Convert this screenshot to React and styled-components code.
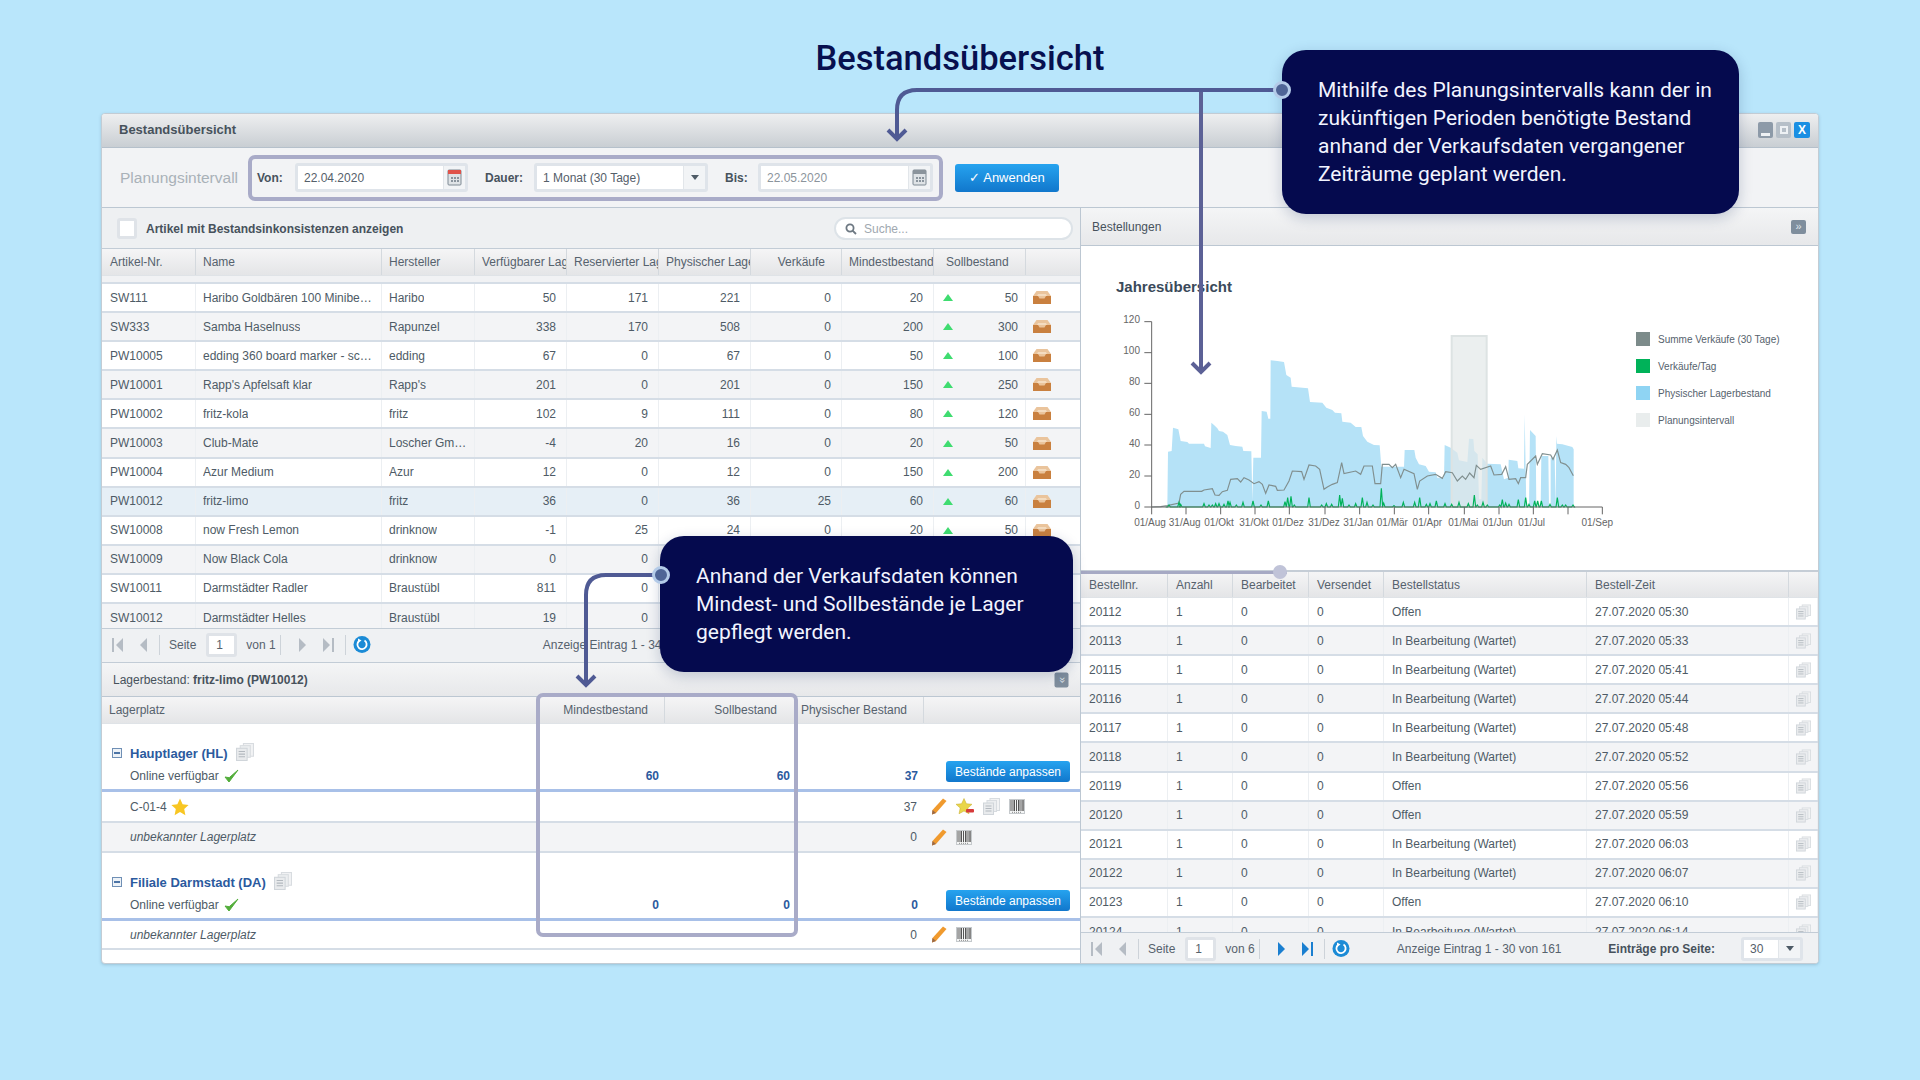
import React from "react";
import styled, { createGlobalStyle } from "styled-components";

const LEFT_COLS = "94px 186px 93px 92px 92px 92px 91px 92px 92px 55px";
const RIGHT_COLS = "87px 65px 76px 75px 203px 202px 1fr";
const STOCK_COLS = "435px 128px 131px 128px 1fr";

const GlobalStyle = createGlobalStyle`
  body {
    margin: 0;
    background: #b9e6fb;
    font-family: "Liberation Sans", Arial, sans-serif;
    font-size: 12px;
    color: #4e5b66;
  }
`;

const Page = styled.div`
  position: relative;
  width: 1920px;
  height: 1080px;
  overflow: hidden;
`;

const PageTitle = styled.h1`
  margin: 0;
  height: 113px;
  padding-top: 38px;
  box-sizing: border-box;
  text-align: center;
  font-family: Roboto, sans-serif;
  font-weight: 500;
  font-size: 34.5px;
  line-height: 40px;
  color: #07104f;
`;

const Window = styled.div`
  margin-left: 101px;
  width: 1718px;
  height: 851px;
  box-sizing: border-box;
  border: 1px solid #c3ccd4;
  border-radius: 4px;
  background: #fff;
  box-shadow: 0 1px 3px rgba(60, 90, 120, 0.25);
  display: flex;
  flex-direction: column;
  overflow: hidden;
`;

const TitleBar = styled.div`
  flex: 0 0 34px;
  box-sizing: border-box;
  display: flex;
  align-items: center;
  justify-content: space-between;
  padding: 0 8px 2px 17px;
  background: linear-gradient(#eeeff0, #c9ced3);
  border-bottom: 1px solid #b5c0cb;
  font-weight: bold;
  font-size: 13px;
  color: #47525c;
`;

const WindowButtons = styled.div`
  display: flex;
  gap: 3px;
`;

const WindowButton = styled.div`
  width: ${(p) => (p.$kind === "close" ? 16 : 15)}px;
  height: 16px;
  border-radius: 2px;
  display: flex;
  align-items: ${(p) => (p.$kind === "min" ? "flex-end" : "center")};
  justify-content: center;
  color: #fff;
  font-weight: bold;
  font-size: 12px;
  background: ${(p) => (p.$kind === "close" ? "#1a8fe3" : p.$kind === "min" ? "#8d9aa8" : "#b6bfc8")};
`;

const MinGlyph = styled.span`
  width: 9px;
  height: 3px;
  margin-bottom: 2px;
  background: #eef1f4;
`;

const MaxGlyph = styled.span`
  box-sizing: border-box;
  width: 8px;
  height: 8px;
  border: 2px solid #eef1f4;
`;

const Toolbar = styled.div`
  flex: 0 0 60px;
  box-sizing: border-box;
  display: flex;
  align-items: center;
  padding-left: 18px;
  background: #f2f3f5;
  border-bottom: 1px solid #bcc7d2;
`;

const IntervalLabel = styled.div`
  font-size: 15.5px;
  color: #a9b1b8;
  width: 117px;
  margin-right: 11px;
  white-space: nowrap;
`;

const IntervalFrame = styled.div`
  box-sizing: border-box;
  width: 695px;
  height: 46px;
  border: 4px solid #a9abc8;
  border-radius: 7px;
  display: flex;
  align-items: center;
  padding-left: 5px;
`;

const FieldLabel = styled.label`
  font-weight: bold;
  color: #47525c;
  width: ${(p) => p.$width}px;
  margin-left: ${(p) => p.$gap || 0}px;
  margin-right: 12px;
`;

const Field = styled.div`
  box-sizing: border-box;
  width: ${(p) => p.$width}px;
  height: 29px;
  border: 3px solid #dfe4ea;
  border-radius: 3px;
  background: #fff;
  display: flex;
  align-items: center;
  justify-content: space-between;
  padding-left: 6px;
  color: ${(p) => (p.$muted ? "#8b949c" : "#55606a")};
`;

const FieldAddon = styled.div`
  width: 21px;
  height: 100%;
  display: flex;
  align-items: center;
  justify-content: center;
  border-left: 1px solid #e2e6ea;
  background: #f2f4f6;
`;

const ApplyButton = styled.button`
  margin-left: 12px;
  width: 104px;
  height: 28px;
  border: 0;
  border-radius: 3px;
  background: linear-gradient(#26a3ef, #1177cc);
  color: #fff;
  font-family: inherit;
  font-size: 13px;
  padding: 0;
`;

const Panes = styled.div`
  flex: 1;
  min-height: 0;
  display: grid;
  grid-template-columns: 979px 1fr;
`;

const LeftPane = styled.div`
  display: flex;
  flex-direction: column;
  border-right: 1px solid #bcc7d2;
  min-width: 0;
`;

const RightPane = styled.div`
  position: relative;
  display: flex;
  flex-direction: column;
  min-width: 0;
`;

const FilterBar = styled.div`
  flex: 0 0 41px;
  box-sizing: border-box;
  display: flex;
  align-items: center;
  padding: 1px 7px 0 15px;
  background: #eef0f2;
  border-bottom: 1px solid #c2ccd6;
  font-weight: bold;
  color: #47525c;
`;

const CheckBox = styled.div`
  box-sizing: border-box;
  width: 20px;
  height: 21px;
  margin-right: 9px;
  border: 3px solid #dfe3e8;
  border-radius: 3px;
  background: #fff;
`;

const SearchBox = styled.div`
  margin-left: auto;
  box-sizing: border-box;
  width: 239px;
  height: 23px;
  border: 2px solid #dde3e8;
  border-radius: 12px;
  background: #fff;
  display: flex;
  align-items: center;
  gap: 7px;
  padding-left: 9px;
  font-weight: normal;
  color: #a0a8b0;
`;

const TableHead = styled.div`
  flex: 0 0 ${(p) => p.$height || 26}px;
  display: grid;
  grid-template-columns: ${(p) => p.$cols};
  background: linear-gradient(#f5f5f6, #e4e5e7);
  border-bottom: 1px solid #dfe3e7;
  color: #56626d;
`;

const HeadCell = styled.div`
  display: flex;
  align-items: center;
  justify-content: ${(p) => (p.$align === "right" ? "flex-end" : "flex-start")};
  padding: 0 ${(p) => p.$pr ?? 0}px 0 ${(p) => p.$pl ?? 7}px;
  border-right: 1px solid ${(p) => (p.$last ? "transparent" : "#d4d9de")};
  white-space: nowrap;
  overflow: hidden;
`;

const TableBody = styled.div`
  flex: 0 0 ${(p) => p.$height}px;
  overflow: hidden;
`;

const ClippedStrip = styled.div`
  height: 8px;
  box-sizing: border-box;
  background: #f1f2f4;
  border-bottom: 2px solid #d5dde6;
`;

const ROW_TONES = { white: "#fff", grey: "#f3f4f6", active: "#e6eff6" };

const Row = styled.div`
  display: grid;
  grid-template-columns: ${(p) => p.$cols};
  height: 29.1px;
  box-sizing: border-box;
  border-bottom: 2px solid #d5dde6;
  background: ${(p) => ROW_TONES[p.$tone]};
`;

const Cell = styled.div`
  display: flex;
  align-items: center;
  justify-content: ${(p) => (p.$align === "right" ? "flex-end" : "flex-start")};
  padding: 0 ${(p) => (p.$align === "right" ? 10 : 6)}px 0 ${(p) => p.$pl ?? 7}px;
  border-right: 1px solid #eceff2;
  white-space: nowrap;
  overflow: hidden;
  min-width: 0;
`;

const CellText = styled.span`
  overflow: hidden;
  text-overflow: ellipsis;
`;

const TargetCell = styled(Cell)`
  justify-content: space-between;
  padding: 0 7px 0 9px;
`;

const UpArrow = styled.span`
  width: 0;
  height: 0;
  border-left: 5.5px solid transparent;
  border-right: 5.5px solid transparent;
  border-bottom: 7px solid #3fdc70;
`;

const PagerBar = styled.div`
  flex: 0 0 ${(p) => p.$height}px;
  box-sizing: border-box;
  display: flex;
  align-items: center;
  padding: 0 15px ${(p) => p.$lift || 0}px 2px;
  background: #eff1f3;
  border-top: 1px solid #c2ccd6;
  border-bottom: ${(p) => (p.$closed ? "1px solid #c2ccd6" : "0")};
  color: #56626d;
`;

const PagerSlot = styled.div`
  width: 26px;
  display: flex;
  justify-content: center;
`;

const PagerSep = styled.div`
  width: 1px;
  height: 20px;
  background: #cdd3d9;
  margin: 0 ${(p) => p.$after ?? 0}px 0 ${(p) => p.$before ?? 3}px;
`;

const PageInput = styled.div`
  box-sizing: border-box;
  width: 31px;
  height: 24px;
  margin: 0 9px 0 10px;
  padding-left: 7px;
  border: 3px solid #dfe3e8;
  border-radius: 3px;
  background: #fff;
  display: flex;
  align-items: center;
`;

const PagerInfo = styled.div`
  margin-left: ${(p) => p.$gap}px;
  white-space: nowrap;
`;

const PageSizeLabel = styled.div`
  margin-left: auto;
  margin-right: 26px;
  font-weight: bold;
  color: #47525c;
`;

const PageSizeSelect = styled(Field)`
  height: 24px;
`;

const SubHeader = styled.div`
  flex: 0 0 34px;
  box-sizing: border-box;
  display: flex;
  align-items: center;
  justify-content: space-between;
  padding: 0 11px;
  background: linear-gradient(#f4f5f6, #e7e8ea);
  border-bottom: 1px solid #bcc7d2;
  color: #47525c;
`;

const OrdersHeader = styled(SubHeader)`
  flex: 0 0 38px;
  padding: 0 12px 0 11px;
`;

const CollapseButton = styled.div`
  width: 15px;
  height: 14px;
  border-radius: 2px;
  background: #7f8e9d;
  color: #dfe6ec;
  font-size: 11px;
  line-height: 13px;
  text-align: center;
  transform: ${(p) => (p.$down ? "rotate(90deg)" : "none")};
`;

const StockGroup = styled.div`
  display: grid;
  grid-template-columns: ${STOCK_COLS};
  height: 68px;
  box-sizing: border-box;
  border-bottom: 3px solid #a8c0e8;
  align-items: end;
`;

const GroupInfo = styled.div`
  padding: 0 0 3px 10px;
`;

const GroupName = styled.div`
  display: flex;
  align-items: center;
  height: 22px;
  margin-bottom: 2px;
  font-weight: bold;
  font-size: 13px;
  color: #2b5a9e;
`;

const CollapseToggle = styled.span`
  box-sizing: border-box;
  width: 10px;
  height: 10px;
  margin-right: 8px;
  border: 1px solid #6f8fb5;
  background: #edf2f7;
  display: flex;
  align-items: center;
  justify-content: center;
  &::after {
    content: "";
    width: 6px;
    height: 2px;
    background: #4c74a6;
  }
`;

const GroupDocs = styled.span`
  display: flex;
  margin: -3px 0 0 8px;
`;

const OnlineLine = styled.div`
  display: flex;
  align-items: center;
  gap: 5px;
  height: 20px;
  padding-left: 18px;
`;

const GroupValue = styled.div`
  text-align: right;
  font-weight: bold;
  color: #2b5a9e;
  padding: 0 6px 6px 0;
`;

const GroupAction = styled.div`
  padding: 0 0 7px 22px;
`;

const AdjustButton = styled.button`
  display: block;
  width: 124px;
  height: 21px;
  border: 0;
  border-radius: 3px;
  background: linear-gradient(#26a3ef, #1177cc);
  color: #fff;
  font-family: inherit;
  font-size: 12px;
  padding: 0;
`;

const BinRow = styled.div`
  display: grid;
  grid-template-columns: 1fr 29px 156px;
  align-items: center;
  height: ${(p) => p.$height}px;
  box-sizing: border-box;
  border-bottom: 2px solid #d5dde6;
  background: ${(p) => ROW_TONES[p.$tone]};
`;

const BinName = styled.div`
  display: flex;
  align-items: center;
  gap: 4px;
  padding-left: 28px;
  font-style: ${(p) => (p.$unknown ? "italic" : "normal")};
`;

const BinValue = styled.div`
  text-align: right;
  padding-right: 7px;
`;

const BinActions = styled.div`
  display: flex;
  align-items: center;
  gap: 9px;
  padding-left: 7px;
`;

const ChartPanel = styled.div`
  flex: 0 0 326px;
  box-sizing: border-box;
  padding: 32px 0 0 35px;
  background: #fff;
  border-bottom: 2px solid #c5cdd6;
`;

const ChartTitle = styled.div`
  height: 18px;
  line-height: 18px;
  font-weight: bold;
  font-size: 15px;
  color: #3a4a5a;
`;

const ChartRow = styled.div`
  display: flex;
  margin-top: 5px;
`;

const ChartSvg = styled.svg`
  display: block;
  width: 510px;
  height: 240px;
  margin-left: 3px;
  font-family: "Liberation Sans", Arial, sans-serif;
`;

const Legend = styled.div`
  margin: 31px 0 0 7px;
  display: flex;
  flex-direction: column;
  gap: 13px;
  font-size: 10px;
  color: #56626d;
`;

const LegendItem = styled.div`
  display: flex;
  align-items: center;
  gap: 8px;
  height: 14px;
`;

const LegendSwatch = styled.span`
  width: 14px;
  height: 14px;
  background: ${(p) => p.$color};
`;

const SliderKnob = styled.div`
  position: absolute;
  left: 0;
  top: 363px;
  width: 206px;
  height: 3px;
  background: #a6a9c4;
  &::after {
    content: "";
    position: absolute;
    right: 0;
    top: -6px;
    width: 14px;
    height: 14px;
    border-radius: 50%;
    background: #c0c3d8;
  }
`;

const StockFrame = styled.div`
  position: absolute;
  left: 536px;
  top: 693px;
  width: 262px;
  height: 244px;
  box-sizing: border-box;
  border: 4px solid #a9abc8;
  border-radius: 7px;
  pointer-events: none;
`;

const Callout = styled.div`
  position: absolute;
  box-sizing: border-box;
  background: #050a4e;
  color: #f2f4ff;
  font-family: Roboto, sans-serif;
  font-size: 21px;
  line-height: 28px;
  border-radius: 24px;
  box-shadow: 0 4px 14px rgba(20, 40, 90, 0.22);
`;

const PlanningCallout = styled(Callout)`
  left: 1282px;
  top: 50px;
  width: 457px;
  height: 164px;
  padding: 26px 0 0 36px;
`;

const StockCallout = styled(Callout)`
  left: 660px;
  top: 536px;
  width: 413px;
  height: 136px;
  padding: 26px 0 0 36px;
`;

const ConnectorLayer = styled.svg`
  position: absolute;
  left: 0;
  top: 0;
  width: 1920px;
  height: 1080px;
  pointer-events: none;
`;

const CalendarIcon = ({ color = "#e0534a" }) => (
  <svg width="15" height="17" viewBox="0 0 15 17">
    <rect x="1" y="1" width="13" height="15" rx="1" fill="#dfe3e6" stroke="#7f8a94" />
    <rect x="1" y="1" width="13" height="4" fill={color} />
    <path d="M4 8h2v2H4zM7 8h2v2H7zM10 8h2v2h-2zM4 11h2v2H4zM7 11h2v2H7zM10 11h2v2h-2z" fill="#8a949d" />
  </svg>
);

const Caret = () => (
  <svg width="8" height="5" viewBox="0 0 8 5">
    <path d="M0 0h8L4 5z" fill="#4e5b66" />
  </svg>
);

const SearchIcon = () => (
  <svg width="12" height="12" viewBox="0 0 12 12" fill="none" stroke="#6d7882" strokeWidth="1.8">
    <circle cx="5" cy="5" r="3.6" />
    <path d="M7.6 7.6 11 11" />
  </svg>
);

const TrayIcon = () => (
  <svg width="18" height="13" viewBox="0 0 18 13">
    <path d="M3.5 0h11L18 5v8H0V5z" fill="#eac49c" />
    <path d="M0 5h5l1.5 2.5h5L13 5h5v8H0z" fill="#c9803f" />
    <path d="M5 3h8l1 2H4z" fill="#f4dcc0" />
  </svg>
);

const PencilIcon = () => (
  <svg width="16" height="17" viewBox="0 0 16 17">
    <path d="M12 0.5 15.5 3 5 15 1 16.5 1.5 12z" fill="#f09a2e" />
    <path d="M1.5 12 5 15 1 16.5z" fill="#9a6a4a" />
  </svg>
);

const StarIcon = ({ size = 18 }) => (
  <svg width={size} height={size} viewBox="0 0 18 18">
    <path d="M9 0.5 11.6 6.2 17.6 6.9 13.2 11 14.4 17.2 9 14.1 3.6 17.2 4.8 11 0.4 6.9 6.4 6.2z" fill="#f8c623" />
  </svg>
);

const StarRemoveIcon = () => (
  <svg width="18" height="17" viewBox="0 0 18 17">
    <path d="M8 0.5 10.4 5.7 16 6.3 11.8 10 13 15.8 8 13 3 15.8 4.2 10 0 6.3 5.6 5.7z" fill="#e9d64a" stroke="#c4ab2a" strokeWidth="0.5" />
    <rect x="10" y="11" width="8" height="3.5" rx="1" fill="#d63a3a" />
  </svg>
);

const DocsIcon = ({ size = 17 }) => (
  <svg width={size} height={size} viewBox="0 0 17 17">
    <rect x="7" y="0.5" width="9.5" height="12" fill="#f2f3f4" stroke="#d8dce0" />
    <rect x="4" y="2.5" width="9.5" height="11" fill="#eceef0" stroke="#d8dce0" />
    <rect x="0.5" y="5" width="10" height="11.5" fill="#e9ebed" stroke="#d0d5da" />
    <path d="M2.5 8h6M2.5 10.5h6M2.5 13h6" stroke="#b3b9bf" strokeWidth="1" />
  </svg>
);

const BarcodeIcon = () => (
  <svg width="16" height="15" viewBox="0 0 16 15">
    <rect x="0.5" y="0.5" width="15" height="14" fill="#f4f5f5" stroke="#c5c9cc" />
    <path d="M2 1v11M4 1v11M5.5 1v11M7.5 1v11M9.5 1v11M11 1v11M13 1v11M14.2 1v11" stroke="#555" strokeWidth="1" />
    <path d="M3 13.3h10" stroke="#888" strokeWidth="1" strokeDasharray="1 1" />
  </svg>
);

const CheckIcon = () => (
  <svg width="15" height="14" viewBox="0 0 15 14">
    <path d="M1 8 5 13 14 1 5.2 8.7z" fill="#52ad3a" stroke="#52ad3a" strokeLinejoin="round" />
  </svg>
);

const RefreshIcon = () => (
  <svg width="18" height="17" viewBox="0 0 18 17">
    <circle cx="9" cy="8.5" r="8.5" fill="#1b8bd6" />
    <path d="M11.5 4.6A4.6 4.6 0 1 1 6 5" fill="none" stroke="#fff" strokeWidth="1.8" />
    <path d="M5 2.5 8.5 4.5 5 7z" fill="#fff" />
  </svg>
);

const PAGER_PATHS = {
  first: "M1 1h2v14H1zM12 1v14L5 8z",
  prev: "M10 1v14L3 8z",
  next: "M3 1v14l7-7z",
  last: "M10 1h2v14h-2zM1 1v14l7-7z",
};

const PagerIcon = ({ kind, active }) => (
  <svg width="13" height="16" viewBox="0 0 13 16">
    <path d={PAGER_PATHS[kind]} fill={active ? "#1a7fd0" : "#b5bcc4"} />
  </svg>
);

const Pager = ({ height, lift, closed, pageCount, active, info, infoGap, children }) => (
  <PagerBar $height={height} $lift={lift} $closed={closed}>
    <PagerSlot><PagerIcon kind="first" /></PagerSlot>
    <PagerSlot><PagerIcon kind="prev" /></PagerSlot>
    <PagerSep $after={9} />
    <span>Seite</span>
    <PageInput>1</PageInput>
    <span>von {pageCount}</span>
    <PagerSep $before={4} $after={9} />
    <PagerSlot><PagerIcon kind="next" active={active} /></PagerSlot>
    <PagerSlot><PagerIcon kind="last" active={active} /></PagerSlot>
    <PagerSep $after={7} />
    <RefreshIcon />
    <PagerInfo $gap={infoGap}>{info}</PagerInfo>
    {children}
  </PagerBar>
);

const articles = [
  ["SW111", "Haribo Goldbären 100 Minibeutel", "Haribo", 50, 171, 221, 0, 20, 50],
  ["SW333", "Samba Haselnuss", "Rapunzel", 338, 170, 508, 0, 200, 300],
  ["PW10005", "edding 360 board marker - schwarz", "edding", 67, 0, 67, 0, 50, 100],
  ["PW10001", "Rapp's Apfelsaft klar", "Rapp's", 201, 0, 201, 0, 150, 250],
  ["PW10002", "fritz-kola", "fritz", 102, 9, 111, 0, 80, 120],
  ["PW10003", "Club-Mate", "Loscher GmbH & Co.", -4, 20, 16, 0, 20, 50],
  ["PW10004", "Azur Medium", "Azur", 12, 0, 12, 0, 150, 200],
  ["PW10012", "fritz-limo", "fritz", 36, 0, 36, 25, 60, 60],
  ["SW10008", "now Fresh Lemon", "drinknow", -1, 25, 24, 0, 20, 50],
  ["SW10009", "Now Black Cola", "drinknow", 0, 0, "", "", "", ""],
  ["SW10011", "Darmstädter Radler", "Braustübl", 811, 0, "", "", "", ""],
  ["SW10012", "Darmstädter Helles", "Braustübl", 19, 0, "", "", "", ""],
];

const orders = [
  ["20112", "Offen", "05:30"],
  ["20113", "In Bearbeitung (Wartet)", "05:33"],
  ["20115", "In Bearbeitung (Wartet)", "05:41"],
  ["20116", "In Bearbeitung (Wartet)", "05:44"],
  ["20117", "In Bearbeitung (Wartet)", "05:48"],
  ["20118", "In Bearbeitung (Wartet)", "05:52"],
  ["20119", "Offen", "05:56"],
  ["20120", "Offen", "05:59"],
  ["20121", "In Bearbeitung (Wartet)", "06:03"],
  ["20122", "In Bearbeitung (Wartet)", "06:07"],
  ["20123", "Offen", "06:10"],
  ["20124", "In Bearbeitung (Wartet)", "06:14"],
];

// chart coordinates are 3x page pixels, origin at page (1130, 300)
const stockArea =
  "115,618 117,452 128,450 132,380 148,385 155,420 175,423 180,428 225,428 228,436 245,441 247,365 255,372 265,382 270,390 282,392 295,402 303,432 320,435 340,437 343,450 367,451 370,600 373,470 396,470 398,330 413,332 418,353 424,353 425,178 445,180 465,183 472,222 485,230 488,257 537,262 543,303 580,305 592,320 610,327 618,335 637,337 640,362 665,365 680,378 697,378 702,405 715,422 735,432 752,433 757,497 825,497 827,447 856,447 860,470 870,490 890,495 900,512 920,514 925,530 945,530 947,432 965,440 985,455 990,478 1015,483 1020,413 1033,414 1036,450 1046,460 1050,595 1057,595 1060,470 1075,488 1115,490 1125,535 1138,530 1139,476 1165,480 1168,502 1185,503 1187,340 1192,618 1200,618 1203,387 1220,405 1222,618 1235,618 1237,465 1258,465 1260,618 1265,618 1265,470 1277,470 1280,618 1282,405 1284,428 1300,430 1330,438 1334,445 1334,618";

const salesSum =
  "68,618 95,617 115,614 150,606 155,580 165,571 218,571 225,567 250,563 258,582 270,583 280,572 295,568 305,535 325,533 335,543 345,530 360,537 375,548 390,542 400,550 410,577 420,552 440,556 445,568 465,567 480,540 490,510 518,512 525,535 540,492 560,495 572,505 585,565 595,558 610,550 625,545 638,485 645,518 680,510 695,520 705,495 730,495 738,548 755,548 760,490 780,490 790,500 800,490 815,530 825,505 855,518 865,565 872,540 895,525 920,520 940,532 950,512 970,515 985,540 1000,525 1010,535 1022,516 1035,530 1042,493 1055,505 1085,495 1095,522 1118,520 1130,497 1140,535 1160,533 1168,548 1175,530 1190,530 1195,490 1220,465 1225,490 1240,458 1265,462 1272,475 1285,447 1295,485 1310,490 1320,500 1333,524";

const salesSpikes = [
  [120, 612], [150, 604], [155, 610], [225, 608], [240, 612], [250, 612], [260, 608], [270, 608], [285, 610], [297, 600],
  [303, 604], [322, 612], [342, 604], [372, 600], [396, 612], [418, 600], [468, 602], [476, 590], [486, 586], [496, 612],
  [540, 590], [578, 612], [592, 608], [608, 610], [632, 582], [640, 592], [660, 612], [680, 608], [700, 590], [714, 604],
  [732, 612], [757, 562], [764, 606], [795, 614], [823, 604], [857, 604], [872, 590], [892, 610], [903, 608], [922, 600],
  [948, 608], [968, 610], [990, 604], [1018, 608], [1036, 582], [1045, 612], [1062, 604], [1075, 612], [1112, 612], [1120, 596],
  [1130, 606], [1140, 610], [1168, 596], [1190, 590], [1200, 610], [1217, 600], [1226, 600], [1237, 600], [1263, 610], [1285, 590],
  [1300, 612], [1310, 612], [1332, 612],
];
const salesDaily = salesSpikes.map(([x, y]) => `${x - 4},618 ${x},${y} ${x + 4},618`).join(" ");

const yTicks = [[120, 62], [100, 155], [80, 247], [60, 340], [40, 432], [20, 525], [0, 618]];
const xTicks = [
  [68, "01/Aug", 63], [171, "31/Aug", 167], [275, "01/Okt", 270], [378, "31/Okt", 375], [481, "01/Dez", 477],
  [588, "31/Dez", 585], [692, "31/Jan", 688], [796, "01/Mär", 790], [899, "01/Apr", 895], [1006, "01/Mai", 1003],
  [1110, "01/Jun", 1106], [1213, "01/Jul", 1208], [1317, "", 1317], [1420, "01/Sep", 1405],
];

const legendItems = [
  ["#7c8b8a", "Summe Verkäufe (30 Tage)"],
  ["#00b259", "Verkäufe/Tag"],
  ["#8fd4f3", "Physischer Lagerbestand"],
  ["#e9eded", "Planungsintervall"],
];

const YearChart = () => (
  <ChartSvg viewBox="-30 0 1530 720">
    <polygon points={stockArea} fill="#b5e2f7" />
    <rect x="968" y="105" width="105" height="513" fill="#e3e8e8" fillOpacity="0.7" stroke="#dde3e3" strokeWidth="6" />
    <polyline points={salesSum} fill="none" stroke="#808f8f" strokeWidth="3.5" />
    <polyline points={`110,618 ${salesDaily} 1334,618`} fill="none" stroke="#00b259" strokeWidth="3.5" />
    <path d="M68 62V618H1420" fill="none" stroke="#666" strokeWidth="3" />
    {yTicks.map(([label, y]) => (
      <g key={label}>
        <path d={`M46 ${y}H68`} stroke="#666" strokeWidth="3" />
        <text x="33" y={y + 5} textAnchor="end" fontSize="30" fill="#666">{label}</text>
      </g>
    ))}
    {xTicks.map(([x, label, labelX]) => (
      <g key={x}>
        <path d={`M${x} 618V640`} stroke="#666" strokeWidth="3" />
        <text x={labelX} y="676" textAnchor="middle" fontSize="30" fill="#666">{label}</text>
      </g>
    ))}
  </ChartSvg>
);

const Chevron = ({ x, y }) => (
  <path d={`M${x - 9} ${y - 10}L${x} ${y - 1}L${x + 9} ${y - 10}`} fill="none" stroke="inherit" strokeWidth="4" />
);

const Connectors = () => (
  <ConnectorLayer viewBox="0 0 1920 1080">
    <g fill="none" stroke="#5c6196" strokeWidth="4">
      <path d="M1201 90V372" />
      <Chevron x={1201} y={373} />
    </g>
    <g fill="none" stroke="#4f5a94" strokeWidth="4">
      <path d="M1283 90H917Q897 90 897 110V138" />
      <Chevron x={897} y={140} />
      <path d="M661 575H606Q586 575 586 595V684" />
      <Chevron x={586} y={686} />
    </g>
  </ConnectorLayer>
);

const CalloutDot = styled.svg`
  position: absolute;
  left: ${(p) => p.$x - 10}px;
  top: ${(p) => p.$y - 10}px;
  width: 20px;
  height: 20px;
`;

const Dot = ({ x, y }) => (
  <CalloutDot $x={x} $y={y} viewBox="0 0 20 20">
    <circle cx="10" cy="10" r="7.5" fill="#4f6596" stroke="#b4cbe8" strokeWidth="3" />
  </CalloutDot>
);

const StockGroupRow = ({ name, min, target, physical }) => (
  <StockGroup>
    <GroupInfo>
      <GroupName>
        <CollapseToggle />
        {name}
        <GroupDocs><DocsIcon size={18} /></GroupDocs>
      </GroupName>
      <OnlineLine>Online verfügbar <CheckIcon /></OnlineLine>
    </GroupInfo>
    <GroupValue>{min}</GroupValue>
    <GroupValue>{target}</GroupValue>
    <GroupValue>{physical}</GroupValue>
    <GroupAction><AdjustButton>Bestände anpassen</AdjustButton></GroupAction>
  </StockGroup>
);

const StockRows = () => (
  <>
    <StockGroupRow name="Hauptlager (HL)" min={60} target={60} physical={37} />
    <BinRow $height={31} $tone="white">
      <BinName>C-01-4 <StarIcon /></BinName>
      <BinValue>37</BinValue>
      <BinActions><PencilIcon /><StarRemoveIcon /><DocsIcon /><BarcodeIcon /></BinActions>
    </BinRow>
    <BinRow $height={30} $tone="grey">
      <BinName $unknown>unbekannter Lagerplatz</BinName>
      <BinValue>0</BinValue>
      <BinActions><PencilIcon /><BarcodeIcon /></BinActions>
    </BinRow>
    <StockGroupRow name="Filiale Darmstadt (DA)" min={0} target={0} physical={0} />
    <BinRow $height={29} $tone="white">
      <BinName $unknown>unbekannter Lagerplatz</BinName>
      <BinValue>0</BinValue>
      <BinActions><PencilIcon /><BarcodeIcon /></BinActions>
    </BinRow>
  </>
);

export default function App() {
  return (
    <Page>
      <GlobalStyle />
      <PageTitle>Bestandsübersicht</PageTitle>
      <Window>
        <TitleBar>
          Bestandsübersicht
          <WindowButtons>
            <WindowButton $kind="min"><MinGlyph /></WindowButton>
            <WindowButton $kind="max"><MaxGlyph /></WindowButton>
            <WindowButton $kind="close">X</WindowButton>
          </WindowButtons>
        </TitleBar>
        <Toolbar>
          <IntervalLabel>Planungsintervall</IntervalLabel>
          <IntervalFrame>
            <FieldLabel $width={26}>Von:</FieldLabel>
            <Field $width={173}>22.04.2020<FieldAddon><CalendarIcon /></FieldAddon></Field>
            <FieldLabel $width={37} $gap={17}>Dauer:</FieldLabel>
            <Field $width={174}>1 Monat (30 Tage)<FieldAddon><Caret /></FieldAddon></Field>
            <FieldLabel $width={21} $gap={17}>Bis:</FieldLabel>
            <Field $width={175} $muted>22.05.2020<FieldAddon><CalendarIcon color="#8b949c" /></FieldAddon></Field>
          </IntervalFrame>
          <ApplyButton>✓ Anwenden</ApplyButton>
        </Toolbar>
        <Panes>
          <LeftPane>
            <FilterBar>
              <CheckBox />
              Artikel mit Bestandsinkonsistenzen anzeigen
              <SearchBox><SearchIcon />Suche...</SearchBox>
            </FilterBar>
            <TableHead $cols={LEFT_COLS}>
              <HeadCell $pl={8}>Artikel-Nr.</HeadCell>
              <HeadCell>Name</HeadCell>
              <HeadCell>Hersteller</HeadCell>
              <HeadCell>Verfügbarer Lagerbestand</HeadCell>
              <HeadCell>Reservierter Lagerbestand</HeadCell>
              <HeadCell>Physischer Lagerbestand</HeadCell>
              <HeadCell $align="right" $pr={16}>Verkäufe</HeadCell>
              <HeadCell>Mindestbestand</HeadCell>
              <HeadCell $pl={12}>Sollbestand</HeadCell>
              <HeadCell $last />
            </TableHead>
            <TableBody $height={352}>
              <ClippedStrip />
              {articles.map((a, i) => (
                <Row key={a[0]} $cols={LEFT_COLS} $tone={a[0] === "PW10012" ? "active" : i % 2 ? "grey" : "white"}>
                  <Cell $pl={8}>{a[0]}</Cell>
                  <Cell><CellText>{a[1]}</CellText></Cell>
                  <Cell><CellText>{a[2]}</CellText></Cell>
                  <Cell $align="right">{a[3]}</Cell>
                  <Cell $align="right">{a[4]}</Cell>
                  <Cell $align="right">{a[5]}</Cell>
                  <Cell $align="right">{a[6]}</Cell>
                  <Cell $align="right">{a[7]}</Cell>
                  <TargetCell><UpArrow />{a[8]}</TargetCell>
                  <Cell><TrayIcon /></Cell>
                </Row>
              ))}
            </TableBody>
            <Pager height={35} lift={2} closed pageCount={1} info="Anzeige Eintrag 1 - 34 von 34" infoGap={172} />
            <SubHeader>
              <span>Lagerbestand: <b>fritz-limo (PW10012)</b></span>
              <CollapseButton $down>»</CollapseButton>
            </SubHeader>
            <TableHead $cols={STOCK_COLS}>
              <HeadCell>Lagerplatz</HeadCell>
              <HeadCell $align="right" $pr={16}>Mindestbestand</HeadCell>
              <HeadCell $align="right" $pr={18}>Sollbestand</HeadCell>
              <HeadCell $align="right" $pr={16} $pl={0}>Physischer Bestand</HeadCell>
              <HeadCell $last />
            </TableHead>
            <StockRows />
          </LeftPane>
          <RightPane>
            <OrdersHeader>
              Bestellungen
              <CollapseButton>»</CollapseButton>
            </OrdersHeader>
            <ChartPanel>
              <ChartTitle>Jahresübersicht</ChartTitle>
              <ChartRow>
                <YearChart />
                <Legend>
                  {legendItems.map(([color, label]) => (
                    <LegendItem key={label}><LegendSwatch $color={color} />{label}</LegendItem>
                  ))}
                </Legend>
              </ChartRow>
            </ChartPanel>
            <SliderKnob />
            <TableHead $cols={RIGHT_COLS} $height={25}>
              <HeadCell $pl={8}>Bestellnr.</HeadCell>
              <HeadCell $pl={8}>Anzahl</HeadCell>
              <HeadCell $pl={8}>Bearbeitet</HeadCell>
              <HeadCell $pl={8}>Versendet</HeadCell>
              <HeadCell $pl={8}>Bestellstatus</HeadCell>
              <HeadCell $pl={8}>Bestell-Zeit</HeadCell>
              <HeadCell $last />
            </TableHead>
            <TableBody $height={334}>
              {orders.map((o, i) => (
                <Row key={o[0]} $cols={RIGHT_COLS} $tone={i % 2 ? "grey" : "white"}>
                  <Cell $pl={8}>{o[0]}</Cell>
                  <Cell $pl={8}>1</Cell>
                  <Cell $pl={8}>0</Cell>
                  <Cell $pl={8}>0</Cell>
                  <Cell $pl={8}>{o[1]}</Cell>
                  <Cell $pl={8}>27.07.2020 {o[2]}</Cell>
                  <Cell $pl={7}><DocsIcon size={18} /></Cell>
                </Row>
              ))}
            </TableBody>
            <Pager height={32} pageCount={6} active info="Anzeige Eintrag 1 - 30 von 161" infoGap={47}>
              <PageSizeLabel>Einträge pro Seite:</PageSizeLabel>
              <PageSizeSelect $width={62}>30<FieldAddon><Caret /></FieldAddon></PageSizeSelect>
            </Pager>
          </RightPane>
        </Panes>
      </Window>
      <StockFrame />
      <Connectors />
      <PlanningCallout>
        Mithilfe des Planungsintervalls kann der in<br />
        zukünftigen Perioden benötigte Bestand<br />
        anhand der Verkaufsdaten vergangener<br />
        Zeiträume geplant werden.
      </PlanningCallout>
      <StockCallout>
        Anhand der Verkaufsdaten können<br />
        Mindest- und Sollbestände je Lager<br />
        gepflegt werden.
      </StockCallout>
      <Dot x={1282} y={90} />
      <Dot x={661} y={575} />
    </Page>
  );
}
